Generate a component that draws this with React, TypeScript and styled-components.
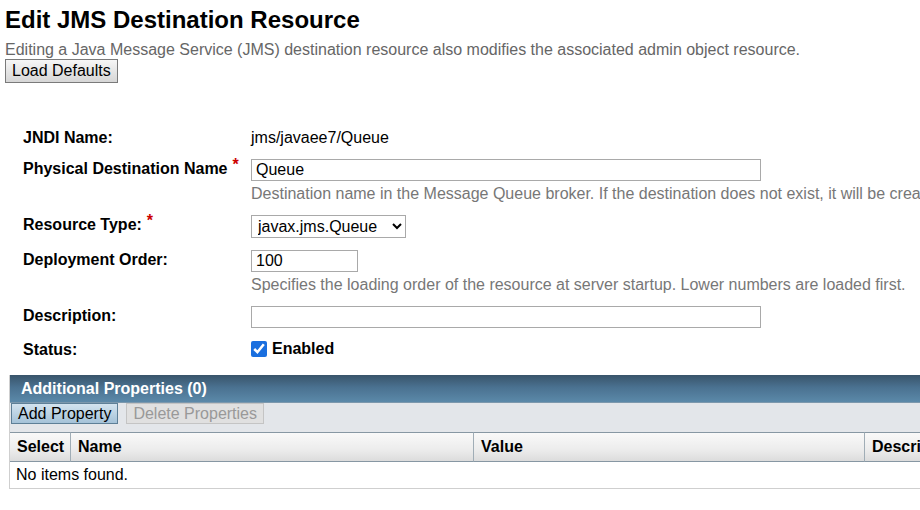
import styled, { createGlobalStyle } from "styled-components";

const GlobalStyle = createGlobalStyle`
  html, body {
    margin: 0;
    padding: 0;
    background: #fff;
    overflow: hidden;
  }
  body {
    font-family: "Liberation Sans", Arial, sans-serif;
    font-size: 16px;
    color: #000;
  }
`;

const Page = styled.div`
  width: 920px;
  height: 510px;
  overflow: hidden;
  padding: 0 0 0 5px;
  box-sizing: border-box;
`;

const Title = styled.h1`
  margin: 0;
  padding-top: 6px;
  font-size: 24px;
  line-height: 28px;
  font-weight: 700;
`;

const Intro = styled.div`
  margin-top: 7px;
  font-size: 16px;
  line-height: 18px;
  color: #666;
  white-space: nowrap;
`;

const PlainButton = styled.button`
  display: block;
  height: 24px;
  padding: 0 6px;
  font-family: inherit;
  font-size: 16px;
  color: #000;
  border: 1px solid #7a7a7a;
  border-radius: 0;
  background: linear-gradient(#f6f6f6, #d6d6d6);
`;

const Form = styled.div`
  margin-top: 45px;
  padding-left: 18px;
`;

const Row = styled.div<{ $gap: number }>`
  display: flex;
  align-items: flex-start;
  margin-top: ${(p) => p.$gap}px;
`;

const Label = styled.div`
  width: 228px;
  flex: none;
  font-weight: 700;
  font-size: 16px;
  line-height: 19px;
  white-space: nowrap;
`;

const Required = styled.sup`
  color: #c00;
  font-size: 16px;
  line-height: 0;
  margin-left: 5px;
  position: relative;
  top: 2px;
`;

const Value = styled.div`
  flex: 1;
  min-width: 0;
  line-height: 20px;
  white-space: nowrap;
`;

const TextField = styled.input<{ $w: number }>`
  display: block;
  width: ${(p) => p.$w}px;
  height: 22px;
  box-sizing: border-box;
  border: 1px solid #a9a9a9;
  padding: 0 4px;
  font-family: inherit;
  font-size: 16px;
  color: #000;
  outline: none;
`;

const Help = styled.div`
  margin-top: 4px;
  color: #777;
  font-size: 16px;
  line-height: 18px;
  white-space: nowrap;
`;

const Select = styled.select`
  display: block;
  height: 23px;
  width: 155px;
  border: 1px solid #a9a9a9;
  border-radius: 0;
  background: #fff;
  font-family: inherit;
  font-size: 16px;
  color: #000;
  padding: 0 2px;
`;

const CheckLine = styled.label`
  display: flex;
  align-items: center;
  gap: 5px;
  font-weight: 700;
  line-height: 18px;
`;

const Check = styled.input`
  margin: 0;
  width: 16px;
  height: 16px;
  accent-color: #1a6fdf;
`;

const Panel = styled.div`
  margin-top: 16px;
  margin-left: 4px;
  width: 1000px;
  border-left: 1px solid #cfcfcf;
`;

const PanelHead = styled.div`
  height: 27px;
  padding-left: 11px;
  display: flex;
  align-items: center;
  color: #fff;
  font-weight: 700;
  font-size: 16px;
  background: linear-gradient(#38546a, #4a7190 45%, #5b89a9);
`;

const Toolbar = styled.div`
  height: 30px;
  display: flex;
  align-items: flex-start;
  gap: 8px;
  padding-left: 1px;
  background: #e3e6ea;
  border-top: 1px solid #7c98ad;
  box-sizing: border-box;
`;

const ToolButton = styled.button<{ $primary?: boolean }>`
  height: 21px;
  padding: 0 6px;
  font-family: inherit;
  font-size: 16px;
  border-radius: 0;
  border: 1px solid ${(p) => (p.$primary ? "#5d7f97" : "#c4c4c4")};
  color: ${(p) => (p.$primary ? "#000" : "#999")};
  background: ${(p) =>
    p.$primary ? "linear-gradient(#d3e3ef, #a4c2d8)" : "#e0e0e0"};
`;

const Grid = styled.div`
  display: grid;
  grid-template-columns: 61px 403px 391px 1fr;
`;

const HeadCell = styled.div`
  height: 30px;
  box-sizing: border-box;
  display: flex;
  align-items: center;
  padding-left: 7px;
  font-weight: 700;
  border-top: 1px solid #8797a3;
  border-bottom: 1px solid #8797a3;
  border-right: 1px solid #a0adb6;
  background: linear-gradient(#f9f9f9, #ececec 60%, #dcdcdc);
`;

const EmptyRow = styled.div`
  grid-column: 1 / -1;
  height: 26px;
  padding-left: 6px;
  display: flex;
  align-items: center;
  border-bottom: 1px solid #cfcfcf;
`;

export default function App() {
  return (
    <Page>
      <GlobalStyle />
      <Title>Edit JMS Destination Resource</Title>
      <Intro>
        Editing a Java Message Service (JMS) destination resource also modifies
        the associated admin object resource.
      </Intro>
      <PlainButton>Load Defaults</PlainButton>

      <Form>
        <Row $gap={0}>
          <Label>JNDI Name:</Label>
          <Value>jms/javaee7/Queue</Value>
        </Row>
        <Row $gap={11}>
          <Label>
            Physical Destination Name<Required>*</Required>
          </Label>
          <Value>
            <TextField $w={510} defaultValue="Queue" />
            <Help>
              Destination name in the Message Queue broker. If the destination
              does not exist, it will be created automatically.
            </Help>
          </Value>
        </Row>
        <Row $gap={12}>
          <Label>
            Resource Type:<Required>*</Required>
          </Label>
          <Value>
            <Select defaultValue="javax.jms.Queue">
              <option>javax.jms.Queue</option>
              <option>javax.jms.Topic</option>
            </Select>
          </Value>
        </Row>
        <Row $gap={12}>
          <Label>Deployment Order:</Label>
          <Value>
            <TextField $w={107} defaultValue="100" />
            <Help>
              Specifies the loading order of the resource at server startup.
              Lower numbers are loaded first.
            </Help>
          </Value>
        </Row>
        <Row $gap={12}>
          <Label>Description:</Label>
          <Value>
            <TextField $w={510} defaultValue="" />
          </Value>
        </Row>
        <Row $gap={12}>
          <Label>Status:</Label>
          <Value>
            <CheckLine>
              <Check type="checkbox" defaultChecked />
              Enabled
            </CheckLine>
          </Value>
        </Row>
      </Form>

      <Panel>
        <PanelHead>Additional Properties (0)</PanelHead>
        <Toolbar>
          <ToolButton $primary>Add Property</ToolButton>
          <ToolButton disabled>Delete Properties</ToolButton>
        </Toolbar>
        <Grid>
          <HeadCell>Select</HeadCell>
          <HeadCell>Name</HeadCell>
          <HeadCell>Value</HeadCell>
          <HeadCell>Description</HeadCell>
          <EmptyRow>No items found.</EmptyRow>
        </Grid>
      </Panel>
    </Page>
  );
}
